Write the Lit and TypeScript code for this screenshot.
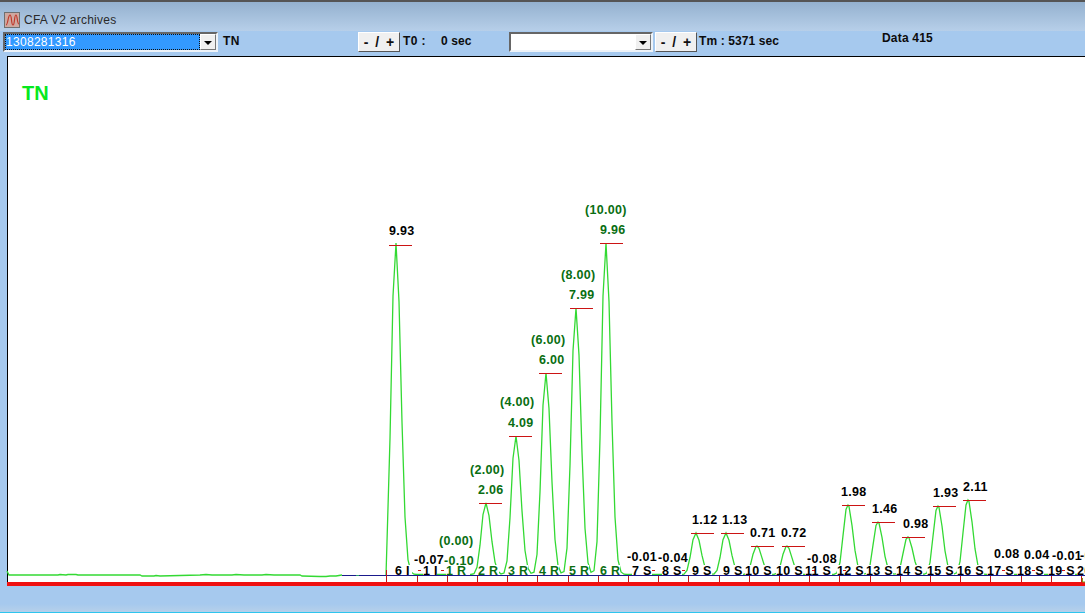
import { LitElement, html, css, svg } from "lit";
import { customElement } from "lit/decorators.js";

const BASE = 574.5;
type Peak = { x: number; top: number; line: number; lx: number };
const peaks: Peak[] = [
  { x: 396, top: 243, line: 245, lx: 389 },
  { x: 486, top: 503, line: 503, lx: 479 },
  { x: 516, top: 436, line: 436, lx: 509 },
  { x: 546, top: 373, line: 373, lx: 539 },
  { x: 576, top: 308, line: 308, lx: 570 },
  { x: 606, top: 243, line: 243, lx: 600 },
  { x: 696, top: 533, line: 533, lx: 691 },
  { x: 726, top: 533, line: 533, lx: 721 },
  { x: 757, top: 546, line: 546, lx: 751 },
  { x: 787, top: 546, line: 546, lx: 782 },
  { x: 848, top: 505, line: 505, lx: 842 },
  { x: 878, top: 522, line: 522, lx: 872 },
  { x: 908, top: 537, line: 537, lx: 902 },
  { x: 938, top: 506, line: 506, lx: 933 },
  { x: 968, top: 500, line: 500, lx: 963 },
];

function shape(d: number): number {
  const a = Math.abs(d);
  return d < 0 ? Math.exp(-Math.pow(a / 6.3, 2.35)) : Math.exp(-Math.pow(a / 6.8, 2));
}

function curve(): string {
  const xs = new Set<number>();
  for (let x = 387; x <= 1085; x += 3) xs.add(x);
  peaks.forEach((p) => xs.add(p.x));
  const pts = [...xs]
    .sort((a, b) => a - b)
    .map((x) => {
      let y = BASE;
      for (const p of peaks) y -= (BASE - p.top) * shape(x - p.x);
      return `${x},${y.toFixed(1)}`;
    });
  return ["386,575", ...pts].join(" ");
}

const flat =
  "7,571 9,575 58,575 60,574.5 66,575 68,574.5 76,574.5 78,575 140,575 142,576 154,576 156,575.5 160,576 200,575 206,574.5 212,575 232,575 236,574.5 244,575 262,575 266,574.5 274,575 300,575 302,576 320,576.5 326,576.5 330,576 336,576 342,575";

const ticks = [417, 447, 477, 507, 537, 568, 598, 628, 658, 688, 719, 749, 779, 809, 839, 870, 900, 930, 960, 990, 1021, 1051, 1081];

const values: [string, number, number, boolean][] = [
  ["9.93", 389, 231, false],
  ["-0.07", 414, 559.5, false],
  ["-0.10", 444, 560.5, true],
  ["(0.00)", 439, 541, true],
  ["2.06", 478, 490, true],
  ["(2.00)", 470, 470, true],
  ["4.09", 508, 423, true],
  ["(4.00)", 500, 402, true],
  ["6.00", 539, 360, true],
  ["(6.00)", 531, 340, true],
  ["7.99", 569, 295, true],
  ["(8.00)", 561, 275, true],
  ["9.96", 600, 230, true],
  ["(10.00)", 585, 210, true],
  ["-0.01", 627, 557, false],
  ["-0.04", 658, 558, false],
  ["1.12", 692, 520, false],
  ["1.13", 722, 520, false],
  ["0.71", 750, 533, false],
  ["0.72", 781, 533, false],
  ["-0.08", 807, 559, false],
  ["1.98", 841, 492, false],
  ["1.46", 872, 509, false],
  ["0.98", 903, 524, false],
  ["1.93", 933, 493, false],
  ["2.11", 963, 487, false],
  ["0.08", 994, 554, false],
  ["0.04", 1024, 555, false],
  ["-0.01", 1052, 556, false],
  ["-0.01", 1080, 556, false],
];

const bottoms: [string, number, number, boolean][] = [
  ["6 I", 395, 17, false],
  ["1 I", 423, 14, false],
  ["1 R", 446, 24, true],
  ["2 R", 478, 21, true],
  ["3 R", 508, 20, true],
  ["4 R", 539, 20, true],
  ["5 R", 569, 20, true],
  ["6 R", 600, 20, true],
  ["7 S", 632, 20, false],
  ["8 S", 662, 20, false],
  ["9 S", 692, 20, false],
  ["9 S", 723, 20, false],
  ["10 S", 745, 27, false],
  ["10 S", 776, 27, false],
  ["11 S", 805, 27, false],
  ["12 S", 837, 27, false],
  ["13 S", 866, 27, false],
  ["14 S", 896, 27, false],
  ["15 S", 927, 27, false],
  ["16 S", 957, 27, false],
  ["17 S", 987, 27, false],
  ["18 S", 1017, 27, false],
  ["19 S", 1048, 27, false],
  ["20", 1077, 14, false],
];

const dashes = [418, 441, 652, 682, 812, 843, 1002, 1032, 1062];

@customElement("app-root")
export class AppRoot extends LitElement {
  static styles = css`
    :host {
      display: block;
      width: 1085px;
      height: 613px;
      overflow: hidden;
      font-family: "Liberation Sans", Arial, sans-serif;
      background: #a6c9ee;
    }
    .page {
      display: flex;
      flex-direction: column;
      height: 613px;
    }
    .title {
      height: 31px;
      flex: none;
      box-sizing: border-box;
      border-top: 2px solid #555;
      background: linear-gradient(#94b1cf, #b7cfe9);
      display: flex;
      align-items: center;
      gap: 4px;
      padding: 7px 0 0 4px;
      font-size: 12px;
      color: #2a2a2a;
      letter-spacing: 0.25px;
    }
    .app-icon {
      width: 16px;
      height: 16px;
      display: block;
    }
    .bar {
      height: 25px;
      flex: none;
      background: #a6c9ee;
      display: flex;
      align-items: flex-start;
      padding: 1px 0 0 3px;
      box-sizing: border-box;
      font-size: 12px;
      font-weight: 700;
      color: #0c0c0c;
    }
    .combo {
      height: 20px;
      box-sizing: border-box;
      background: #fff;
      border: 2px solid;
      border-color: #666 #eef3f8 #eef3f8 #666;
      display: flex;
      align-items: stretch;
      flex: none;
    }
    .combo.first { width: 215px; }
    .combo.second { width: 144px; margin-left: 37px; }
    .field { flex: 1; }
    .field.sel {
      background: #3399ff;
      color: #fff;
      font-weight: 400;
      letter-spacing: 0.3px;
      font-size: 12px;
      line-height: 17px;
      padding-left: 1px;
      outline: 1px dotted #111;
      outline-offset: -1px;
    }
    .drop {
      width: 16px;
      background: #f0f0f0;
      border: 1px solid;
      border-color: #fff #777 #777 #fff;
      box-sizing: border-box;
      display: flex;
      align-items: center;
      justify-content: center;
    }
    .drop::after {
      content: "";
      border: 4px solid transparent;
      border-top: 4px solid #000;
      border-bottom: 0;
      margin-top: 1px;
    }
    .btn {
      width: 42px;
      height: 20px;
      box-sizing: border-box;
      background: #f0f0f0;
      border: 1px solid;
      border-color: #fff #555 #555 #fff;
      font-size: 14px;
      font-weight: 700;
      line-height: 18px;
      text-align: center;
      flex: none;
      word-spacing: 3px;
      color: #111;
    }
    .lbl { line-height: 18px; flex: none; white-space: nowrap; }
    .tn { margin-left: 5px; width: 135px; letter-spacing: 0.5px; }
    .t0 { margin-left: 3px; width: 38px; letter-spacing: 0.4px; }
    .zero { width: 31px; letter-spacing: 0.1px; }
    .btn.second { margin-left: 2px; }
    .tm { margin-left: 2px; width: 183px; letter-spacing: 0.1px; }
    .data { line-height: 10px; margin-top: 1px; letter-spacing: 0.2px; }
    .chart {
      flex: 1;
      min-height: 0;
      display: block;
      background: #fff;
    }
    svg.plot {
      display: block;
      width: 1085px;
      height: 530px;
    }
    .v {
      font: 700 12.5px "Liberation Sans", Arial, sans-serif;
      fill: #000;
      letter-spacing: 0.3px;
      dominant-baseline: central;
    }
    .v.g { fill: #0a6e12; }
    .big {
      font: 700 20px "Liberation Sans", Arial, sans-serif;
      fill: #06e81e;
      dominant-baseline: central;
    }
    .foot {
      flex: none;
      height: 27px;
      background: linear-gradient(#a6c9ee 0, #a6c9ee 18px, #b6d0ea 26px);
      border-bottom: 1px solid #2dc5ee;
      box-sizing: border-box;
    }
  `;

  render() {
    const o = 56;
    return html`
      <div class="page">
        <div class="title">
          <svg class="app-icon" viewBox="0 0 16 16">
            <rect x="0.5" y="0.5" width="15" height="15" fill="#cfa8a0" stroke="#6f6f6f" />
            <path d="M2 13 C4 13 4 3 6 3 C8 3 7 13 9 13 C11 13 10 3 12 3 C13.5 3 13 12 15 12" fill="none" stroke="#c0392b" stroke-width="1.2" />
          </svg>
          <span>CFA V2 archives</span>
        </div>
        <div class="bar">
          <div class="combo first"><div class="field sel">1308281316</div><div class="drop"></div></div>
          <span class="lbl tn">TN</span>
          <div class="btn">- / +</div>
          <span class="lbl t0">T0 :</span>
          <span class="lbl zero">0 sec</span>
          <div class="combo second"><div class="field"></div><div class="drop"></div></div>
          <div class="btn second">- / +</div>
          <span class="lbl tm">Tm : 5371 sec</span>
          <span class="lbl data">Data 415</span>
        </div>
        <div class="chart">
          <svg class="plot" viewBox="0 ${o} 1085 530">
            <rect x="0" y="${o}" width="7" height="530" fill="#a6c9ee" />
            <path d="M7.5 ${o} V584 M7 ${o + 0.5} H1085" stroke="#000" stroke-width="1" fill="none" />
            <polyline points="${flat}" fill="none" stroke="#33d933" stroke-width="1.3" />
            <polyline points="${curve()}" fill="none" stroke="#33d933" stroke-width="1.3" />
            ${bottoms.map(([, x, w]) => svg`<rect x="${x}" y="565" width="${w}" height="10" fill="#fff" />`)}
            <path d="M342 575.5 H1085" stroke="#1a1a8c" stroke-width="1" />
            <path d="M356 575.5 h3" stroke="#2a9a6a" stroke-width="1" />
            ${dashes.map((x) => svg`<path d="M${x} 570.5 h3" stroke="#d01818" stroke-width="1" />`)}
            <path d="M386.5 570 V584" stroke="#c01818" stroke-width="1" />
            ${ticks.map((x) => svg`<path d="M${x + 0.5} 576 V584" stroke="#c01818" stroke-width="1" />`)}
            ${peaks.map((p) => svg`<path d="M${p.lx} ${p.line + 0.5} h23" stroke="#cc1414" stroke-width="1" />`)}
            <path d="M7 584 H1085" stroke="#f01010" stroke-width="4" />
            <path d="M1082.5 578 V582 H1085" stroke="#7a9a10" stroke-width="1" fill="none" />
            <text class="big" x="22" y="93">TN</text>
            ${values.map(([t, x, y, g]) => svg`<text class="v ${g ? "g" : ""}" x="${x}" y="${y}">${t}</text>`)}
            ${bottoms.map(([t, x, , g]) => svg`<text class="v ${g ? "g" : ""}" x="${x}" y="570.5">${t}</text>`)}
          </svg>
        </div>
        <div class="foot"></div>
      </div>
    `;
  }
}
